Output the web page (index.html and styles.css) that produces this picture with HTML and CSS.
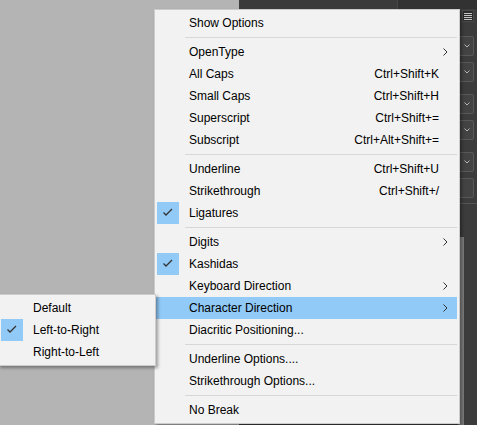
FILE: index.html
```html
<!DOCTYPE html>
<html>
<head>
<meta charset="utf-8">
<title>Character menu</title>
<link rel="stylesheet" href="styles.css">
</head>
<body>
<div class="desk">
  <div class="canvas"></div>
  <div class="panel">
    <div class="tabbar"><div class="tab"></div></div>
    <div class="panel-body">
      <div class="controls">
        <div class="hamburger"><span></span><span></span><span></span><span></span></div>
        <div class="dd first"><svg width="6" height="4" viewBox="0 0 6 4"><polyline points="0.5,0.5 3,3 5.5,0.5" fill="none" stroke="#b4b4b4" stroke-width="1"/></svg></div>
        <div class="dd"><svg width="6" height="4" viewBox="0 0 6 4"><polyline points="0.5,0.5 3,3 5.5,0.5" fill="none" stroke="#b4b4b4" stroke-width="1"/></svg></div>
        <div class="dd wide"><svg width="6" height="4" viewBox="0 0 6 4"><polyline points="0.5,0.5 3,3 5.5,0.5" fill="none" stroke="#b4b4b4" stroke-width="1"/></svg></div>
        <div class="dd"><svg width="6" height="4" viewBox="0 0 6 4"><polyline points="0.5,0.5 3,3 5.5,0.5" fill="none" stroke="#b4b4b4" stroke-width="1"/></svg></div>
        <div class="dd wide"><svg width="6" height="4" viewBox="0 0 6 4"><polyline points="0.5,0.5 3,3 5.5,0.5" fill="none" stroke="#b4b4b4" stroke-width="1"/></svg></div>
        <div class="dd"></div>
      </div>
      <div class="divider"></div>
      <div class="scroll"><div class="thumb"></div></div>
    </div>
  </div>
</div>

<div class="menu main">
  <div class="item"><span class="chk"></span><span class="label">Show Options</span><span class="key"></span><span class="arrow"></span></div>
  <div class="sep"></div>
  <div class="item"><span class="chk"></span><span class="label">OpenType</span><span class="key"></span><span class="arrow"><svg width="5" height="8" viewBox="0 0 5 8"><polyline points="0.5,0.5 4,4 0.5,7.5" fill="none" stroke="#333" stroke-width="1"/></svg></span></div>
  <div class="item"><span class="chk"></span><span class="label">All Caps</span><span class="key">Ctrl+Shift+K</span><span class="arrow"></span></div>
  <div class="item"><span class="chk"></span><span class="label">Small Caps</span><span class="key">Ctrl+Shift+H</span><span class="arrow"></span></div>
  <div class="item"><span class="chk"></span><span class="label">Superscript</span><span class="key">Ctrl+Shift+=</span><span class="arrow"></span></div>
  <div class="item"><span class="chk"></span><span class="label">Subscript</span><span class="key">Ctrl+Alt+Shift+=</span><span class="arrow"></span></div>
  <div class="sep"></div>
  <div class="item"><span class="chk"></span><span class="label">Underline</span><span class="key">Ctrl+Shift+U</span><span class="arrow"></span></div>
  <div class="item"><span class="chk"></span><span class="label">Strikethrough</span><span class="key">Ctrl+Shift+/</span><span class="arrow"></span></div>
  <div class="item"><span class="chk on"><svg width="22" height="22" viewBox="0 0 22 22"><polyline points="6.5,10.5 9,13 15,7" fill="none" stroke="#333" stroke-width="1.3"/></svg></span><span class="label">Ligatures</span><span class="key"></span><span class="arrow"></span></div>
  <div class="sep"></div>
  <div class="item"><span class="chk"></span><span class="label">Digits</span><span class="key"></span><span class="arrow"><svg width="5" height="8" viewBox="0 0 5 8"><polyline points="0.5,0.5 4,4 0.5,7.5" fill="none" stroke="#333" stroke-width="1"/></svg></span></div>
  <div class="item"><span class="chk on"><svg width="22" height="22" viewBox="0 0 22 22"><polyline points="6.5,10.5 9,13 15,7" fill="none" stroke="#333" stroke-width="1.3"/></svg></span><span class="label">Kashidas</span><span class="key"></span><span class="arrow"></span></div>
  <div class="item"><span class="chk"></span><span class="label">Keyboard Direction</span><span class="key"></span><span class="arrow"><svg width="5" height="8" viewBox="0 0 5 8"><polyline points="0.5,0.5 4,4 0.5,7.5" fill="none" stroke="#333" stroke-width="1"/></svg></span></div>
  <div class="item hl"><span class="chk"></span><span class="label">Character Direction</span><span class="key"></span><span class="arrow"><svg width="5" height="8" viewBox="0 0 5 8"><polyline points="0.5,0.5 4,4 0.5,7.5" fill="none" stroke="#333" stroke-width="1"/></svg></span></div>
  <div class="item"><span class="chk"></span><span class="label">Diacritic Positioning...</span><span class="key"></span><span class="arrow"></span></div>
  <div class="sep"></div>
  <div class="item"><span class="chk"></span><span class="label">Underline Options....</span><span class="key"></span><span class="arrow"></span></div>
  <div class="item"><span class="chk"></span><span class="label">Strikethrough Options...</span><span class="key"></span><span class="arrow"></span></div>
  <div class="sep"></div>
  <div class="item"><span class="chk"></span><span class="label">No Break</span><span class="key"></span><span class="arrow"></span></div>
</div>

<div class="menu sub">
  <div class="item"><span class="chk"></span><span class="label">Default</span></div>
  <div class="item"><span class="chk on"><svg width="22" height="22" viewBox="0 0 22 22"><polyline points="6.5,10.5 9,13 15,7" fill="none" stroke="#333" stroke-width="1.3"/></svg></span><span class="label">Left-to-Right</span></div>
  <div class="item"><span class="chk"></span><span class="label">Right-to-Left</span></div>
</div>
</body>
</html>
```

FILE: styles.css
```css
html, body {
  margin: 0;
  padding: 0;
}

body {
  width: 477px;
  height: 425px;
  overflow: hidden;
  position: relative;
  font-family: "Liberation Sans", Arial, sans-serif;
  font-size: 12px;
  color: #000;
}

.desk {
  display: flex;
  height: 425px;
}

.canvas {
  width: 239px;
  background: #b4b4b4;
}

.panel {
  flex: 1;
  display: flex;
  flex-direction: column;
  background: #3c3c3c;
}

.tabbar {
  height: 9px;
  display: flex;
  background: #323232;
}

.tab {
  width: 158px;
  background: #3b3b3b;
  border-right: 1px solid #464646;
}

.panel-body {
  flex: 1;
  display: flex;
  flex-direction: column;
}

.controls {
  display: flex;
  flex-direction: column;
  align-items: flex-end;
  padding: 1px 3px 0 0;
}

.hamburger {
  width: 12px;
  height: 12px;
  box-sizing: border-box;
  background: #2c2c2c;
  border: 1px solid #4a4a4a;
  display: flex;
  flex-direction: column;
  justify-content: center;
  gap: 1px;
  padding: 0 1px;
}

.hamburger span {
  height: 1px;
  background: #c6c6c6;
}

.dd {
  width: 70px;
  height: 20px;
  box-sizing: border-box;
  border: 1px solid #595959;
  border-radius: 2px;
  background: #434343;
  display: flex;
  align-items: center;
  justify-content: flex-end;
  padding-right: 3px;
  margin-top: 6px;
}

.dd.first {
  margin-top: 14px;
}

.dd.wide {
  margin-top: 12px;
}

.dd svg {
  display: block;
}

.divider {
  height: 1px;
  background: #555;
  margin-top: 5px;
}

.scroll {
  flex: 1;
  display: flex;
  justify-content: flex-end;
  padding-right: 13px;
}

.thumb {
  width: 6px;
  margin-top: 33px;
  background: #7c7c7c;
}

/* popup menus */
.menu {
  position: absolute;
  background: #f2f2f2;
  border: 1px solid #cccccc;
  padding: 2px 2px 2px 1px;
  box-shadow: 2px 2px 3px rgba(0, 0, 0, 0.35);
}

.main {
  left: 154px;
  top: 9px;
  width: 301px;
}

.sub {
  left: -2px;
  top: 294px;
  width: 153px;
}

.item {
  display: grid;
  grid-template-columns: 33px 1fr auto 18px;
  align-items: center;
  height: 22px;
  line-height: 22px;
  white-space: nowrap;
}

.sub .item {
  grid-template-columns: 33px 1fr;
}

.item.hl {
  background: #91c9f7;
}

.chk {
  display: block;
  width: 22px;
  height: 22px;
  margin-left: 1px;
}

.chk.on {
  background: #91c9f7;
}

.chk svg {
  display: block;
}

.key {
  text-align: right;
}

.arrow svg {
  display: block;
  margin-left: 4px;
}

.sep {
  height: 7px;
  display: flex;
  align-items: center;
  padding-left: 29px;
}

.sep::after {
  content: "";
  flex: 1;
  height: 1px;
  background: #d7d7d7;
}
```
